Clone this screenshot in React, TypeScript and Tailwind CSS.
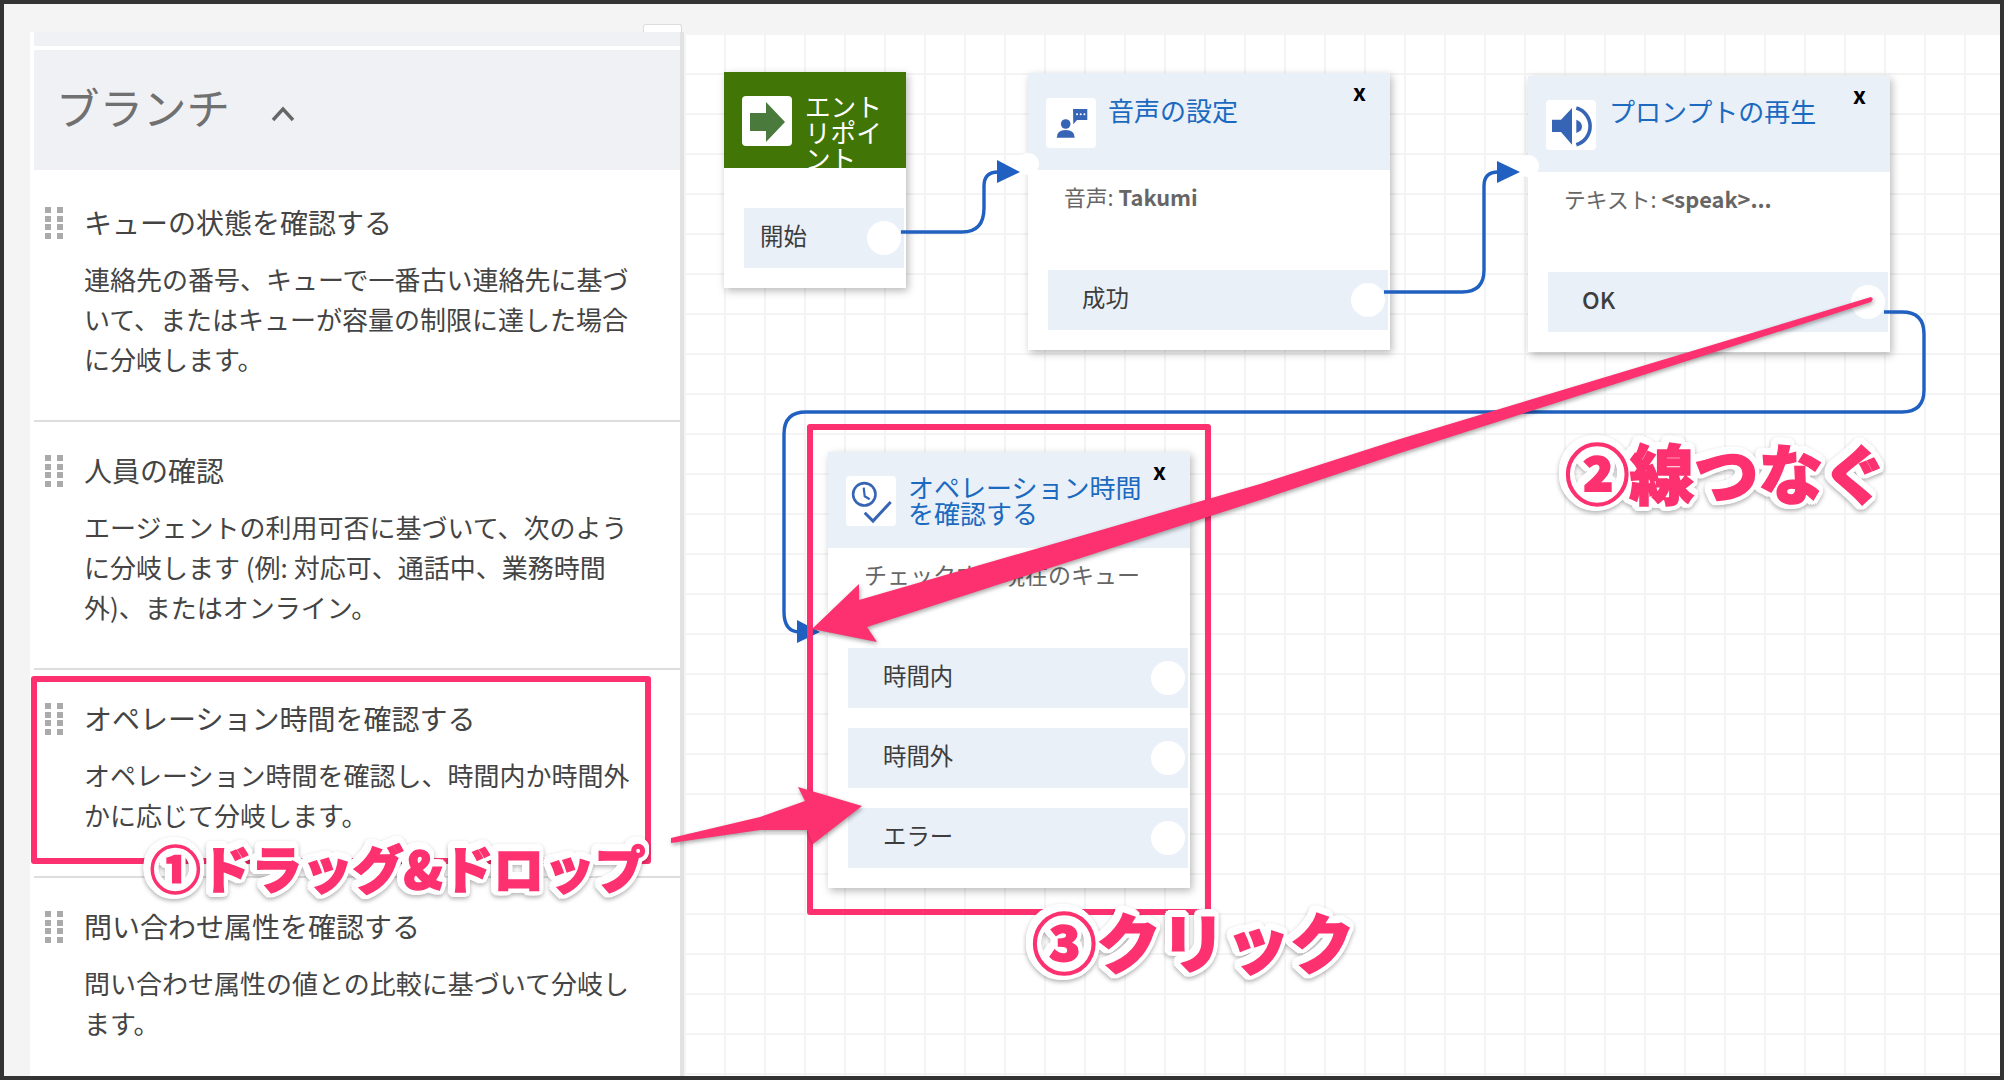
import type { ReactNode } from 'react';

const items = [
    {
        title: 'キューの状態を確認する',
        desc: '連絡先の番号、キューで一番古い連絡先に基づいて、またはキューが容量の制限に達した場合に分岐します。',
        box: 'pt-[32px] pb-[41px]',
    },
    {
        title: '人員の確認',
        desc: 'エージェントの利用可否に基づいて、次のように分岐します (例: 対応可、通話中、業務時間外)、またはオンライン。',
        box: 'pt-[28px] pb-[41px]',
    },
    {
        title: 'オペレーション時間を確認する',
        desc: 'オペレーション時間を確認し、時間内か時間外かに応じて分岐します。',
        box: 'pt-[28px] pb-[41px]',
    },
    {
        title: '問い合わせ属性を確認する',
        desc: '問い合わせ属性の値との比較に基づいて分岐します。',
        box: 'pt-[28px] pb-[41px]',
    },
];

function DragHandle() {
    return (
        <div className="grid grid-cols-[6px_6px] gap-x-[6px] gap-y-[2.5px] mt-[5px] self-start shrink-0">
            {Array.from({ length: 8 }).map((_, i) => (
                <span key={i} className="h-[6px] bg-[#aaaaaa]" />
            ))}
        </div>
    );
}

function SidebarItem({ title, desc, box, last }: { title: string; desc: string; box: string; last: boolean }) {
    return (
        <div className={`flex pl-[11px] ${box} ${last ? '' : 'border-b-2 border-[#dddddd]'}`}>
            <DragHandle />
            <div className="ml-[22px] w-[552px] -translate-x-px">
                <h3 className="text-[28px] leading-[40px] font-normal text-[#444444] mb-[17px]">{title}</h3>
                <p className="text-[26px] leading-[40px] text-[#444444]">{desc}</p>
            </div>
        </div>
    );
}

function Row({ label, pad, bold }: { label: string; pad: string; bold?: boolean }) {
    return (
        <div className={`relative ml-[20px] mr-[2px] h-[60px] bg-[#e9f0f8] flex items-center pb-[4px] ${pad}`}>
            <span className={`text-[23.4px] text-[#3d3d3d] ${bold ? 'font-medium' : ''}`}>{label}</span>
            <span className="absolute right-[3px] top-[13px] w-[34px] h-[34px] rounded-full bg-white" />
        </div>
    );
}

function IconBox({ children }: { children: ReactNode }) {
    return (
        <div className="w-[50px] h-[50px] shrink-0 rounded-[4px] bg-white">
            <svg viewBox="0 0 50 50" className="w-[50px] h-[50px]">
                {children}
            </svg>
        </div>
    );
}

const nodeBase = 'absolute w-[362px] bg-white shadow-[2px_3px_8px_rgba(0,0,0,0.28)]';

function CloseX() {
    return <span className="absolute right-[24px] top-[3px] text-[23px] leading-[30px] font-bold text-black">x</span>;
}

// white outline is built from chained drop shadows so the pink stroke can thicken the letters
const stepLabel =
    "absolute font-black text-[#fd3170] whitespace-nowrap [-webkit-text-stroke:1.5px_#fd3170] [filter:drop-shadow(2.5px_0_0_#fff)_drop-shadow(-2.5px_0_0_#fff)_drop-shadow(0_2.5px_0_#fff)_drop-shadow(0_-2.5px_0_#fff)_drop-shadow(1.7px_1.7px_0_#fff)_drop-shadow(-1.7px_-1.7px_0_#fff)_drop-shadow(1.7px_-1.7px_0_#fff)_drop-shadow(-1.7px_1.7px_0_#fff)_drop-shadow(0_2px_2px_rgba(0,0,0,0.3))]";

function App() {
    return (
        <div className="relative w-[2004px] h-[1080px] overflow-hidden font-['Noto_Sans_CJK_JP','Noto_Sans',sans-serif]">
            {/* window frame */}
            <div className="flex h-full bg-[#f4f4f4] border-4 border-[#333333]">
                <div className="w-[26px] shrink-0" />

                {/* block list */}
                <aside className="relative mt-[28px] w-[654px] shrink-0 bg-white border-l-4 border-l-white border-r-4 border-r-[#e2e2e2]">
                    <div className="absolute right-[-2px] top-[-8px] w-[39px] h-[8px] bg-white border border-b-0 border-[#dddddd] rounded-t-[3px]" />
                    <div className="h-[14px] bg-[#f0f1f4] mb-[4px]" />
                    <div className="h-[120px] bg-[#f0f1f4] flex items-center pl-[22px] pb-[6px]">
                        <h2 className="text-[43.5px] leading-none font-normal text-[#707070]">ブランチ</h2>
                        <svg viewBox="0 0 24 16" className="w-[24px] h-[16px] ml-[41px] mt-[14px]">
                            <path d="M2 14 L12 3 L22 14" fill="none" stroke="#666666" strokeWidth="3.4" />
                        </svg>
                    </div>
                    {items.map((item, i) => (
                        <SidebarItem key={item.title} {...item} last={i === items.length - 1} />
                    ))}
                </aside>

                {/* grid canvas */}
                <main className="flex-1 mt-[29px] bg-white bg-[linear-gradient(to_right,#f4f4f4_2.5px,transparent_2.5px),linear-gradient(to_bottom,#f4f4f4_2.5px,transparent_2.5px)] bg-[size:40px_40px] bg-[position:0px_0px]" />
            </div>

            {/* entry point */}
            <div className="absolute left-[724px] top-[72px] w-[182px] h-[216px] bg-white shadow-[2px_3px_8px_rgba(0,0,0,0.28)]">
                <div className="h-[96px] bg-[#417505] flex items-start pl-[18px] pt-[24px] overflow-hidden">
                    <IconBox>
                        <polygon points="8,17 24,17 24,6 43,26 24,46 24,35 8,35" fill="#4a7a3c" />
                    </IconBox>
                    <span className="ml-[13px] mt-[-3px] w-[80px] text-[25.6px] leading-[26px] text-white">エントリポイント</span>
                </div>
                <div className="pt-[40px]">
                    <Row label="開始" pad="pl-[16px]" />
                </div>
            </div>

            {/* set voice */}
            <div className={`${nodeBase} left-[1028px] top-[73px] h-[277px]`}>
                <div className="relative h-[97px] bg-[#e9f0f8] flex items-start pl-[18px] pt-[25px]">
                    <IconBox>
                        <circle cx="19.7" cy="26" r="4.8" fill="#3765b5" />
                        <path d="M10.7 39.7 Q10.7 32 19.7 32 Q28.7 32 28.7 39.7 Z" fill="#3765b5" />
                        <path d="M27 11 H41.3 V22 H31 L27.3 26.3 Z" fill="#3765b5" />
                        <circle cx="31" cy="16.3" r="1" fill="#fff" />
                        <circle cx="34.7" cy="16.3" r="1" fill="#fff" />
                        <circle cx="38.4" cy="16.3" r="1" fill="#fff" />
                    </IconBox>
                    <span className="ml-[12px] mt-[-1px] text-[26px] leading-[26px] text-[#1b6ac0]">音声の設定</span>
                    <CloseX />
                </div>
                <div className="h-[100px] pt-[13px] pl-[36px] text-[21.8px] leading-[28px] text-[#666666]">
                    音声: <b className="font-bold">Takumi</b>
                </div>
                <Row label="成功" pad="pl-[34px]" />
            </div>

            {/* play prompt */}
            <div className={`${nodeBase} left-[1528px] top-[76px] h-[276px]`}>
                <div className="relative h-[96px] bg-[#e9f0f8] flex items-start pl-[18px] pt-[24px]">
                    <IconBox>
                        <polygon points="6,19.7 15,19.7 26,8 26,44.7 15,32 6,32" fill="#3765b5" />
                        <path d="M30.3 19.7 Q36 22 36 26.5 Q36 31 30.3 33 Z" fill="#3765b5" />
                        <path d="M30.3 8 A19.1 19.1 0 0 1 30.3 44.7" fill="none" stroke="#3765b5" strokeWidth="3.6" />
                    </IconBox>
                    <span className="ml-[13px] mt-[-2px] text-[26px] leading-[26px] text-[#1b6ac0]">プロンプトの再生</span>
                    <CloseX />
                </div>
                <div className="h-[100px] pt-[13px] pl-[36px] text-[21.8px] leading-[28px] text-[#666666]">
                    テキスト: <b className="font-bold">&lt;speak&gt;...</b>
                </div>
                <Row label="OK" pad="pl-[34px]" bold />
            </div>

            {/* check hours of operation */}
            <div className={`${nodeBase} left-[828px] top-[452px] h-[436px]`}>
                <div className="relative h-[96px] bg-[#e9f0f8] flex items-start pl-[18px] pt-[24px]">
                    <IconBox>
                        <circle cx="18.3" cy="18.3" r="11.2" fill="none" stroke="#3765b5" strokeWidth="2.6" />
                        <path d="M17.7 11.7 L18.7 20.3 L23.7 23.3" fill="none" stroke="#3765b5" strokeWidth="2.2" />
                        <path d="M18.7 36.7 L27 45 L44.7 26" fill="none" stroke="#3765b5" strokeWidth="3" />
                    </IconBox>
                    <span className="ml-[12px] mt-[-2px] text-[26px] leading-[26px] text-[#1b6ac0] w-[240px]">オペレーション時間を確認する</span>
                    <CloseX />
                </div>
                <div className="h-[100px] pt-[12px] pl-[36px] text-[23px] leading-[28px] text-[#666666]">チェックする現在のキュー</div>
                <div className="flex flex-col gap-[20px]">
                    <Row label="時間内" pad="pl-[35px]" />
                    <Row label="時間外" pad="pl-[35px]" />
                    <Row label="エラー" pad="pl-[35px]" />
                </div>
            </div>

            {/* connectors */}
            <svg viewBox="0 0 2004 1080" className="absolute inset-0 w-[2004px] h-[1080px]">
                <circle cx="1028" cy="164" r="11" fill="#fff" />
                <circle cx="1528" cy="166" r="11" fill="#fff" />
                <circle cx="828" cy="624" r="11" fill="#fff" />
                <g fill="none" stroke="#1f60c0" strokeWidth="3.4">
                    <path d="M901 232 H962 Q984 232 984 208 V186 Q984 172 998 172" />
                    <path d="M1384 292 H1462 Q1484 292 1484 270 V186 Q1484 172 1498 172" />
                    <path d="M1884 312 H1902 Q1924 312 1924 334 V390 Q1924 412 1902 412 H806 Q784 412 784 434 V612 Q784 632 800 632" />
                </g>
                <g fill="#1f60c0">
                    <polygon points="997,160 1020,172 997,183" />
                    <polygon points="1497,161 1520,172 1497,183" />
                    <polygon points="797,620 820,632 797,643" />
                </g>

                {/* pink markup */}
                <g fill="none" stroke="#fd3170" strokeWidth="6" strokeLinejoin="round">
                    <rect x="810" y="427" width="398" height="485" />
                    <rect x="34" y="679" width="614" height="182" />
                </g>
                <g fill="#fd3170" style={{ filter: 'drop-shadow(1px 2px 2px rgba(0,0,0,0.35))' }}>
                    <polygon points="812,629 859,584 859,600 1260,484 1400,439 1871,297 1873,299 1871,302 1400,453 1260,500 867,627 877,642" />
                    <polygon points="671,838 760,817 805,801 798,787 862,806 813,844 807,830 760,830 671,843" />
                </g>
            </svg>

            {/* step labels */}
            <span className={`${stepLabel} left-[150px] top-[828px] text-[50.7px] leading-[78px]`}>①ドラッグ&amp;ドロップ</span>
            <span className={`${stepLabel} left-[1565px] top-[431px] text-[64.5px] leading-[80px]`}>②線つなぐ</span>
            <span className={`${stepLabel} left-[1032px] top-[900px] text-[64.5px] leading-[80px]`}>③クリック</span>
        </div>
    );
}

export default App;
